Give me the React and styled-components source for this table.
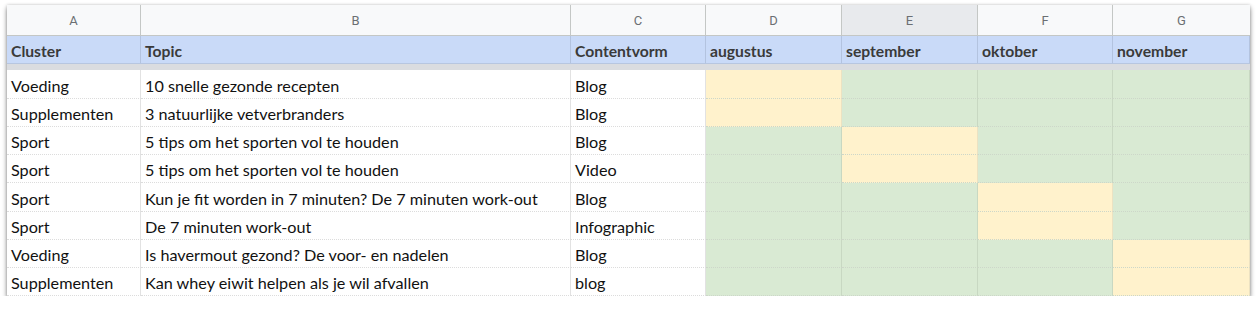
import React from 'react';
import styled, {createGlobalStyle} from 'styled-components';

const columns = ['A', 'B', 'C', 'D', 'E', 'F', 'G'];
const headers = ['Cluster', 'Topic', 'Contentvorm', 'augustus', 'september', 'oktober', 'november'];

// month column that is highlighted (yellow) per row: 0 = D, 1 = E ...
const rows = [
    ['Voeding', '10 snelle gezonde recepten', 'Blog', 0],
    ['Supplementen', '3 natuurlijke vetverbranders', 'Blog', 0],
    ['Sport', '5 tips om het sporten vol te houden', 'Blog', 1],
    ['Sport', '5 tips om het sporten vol te houden', 'Video', 1],
    ['Sport', 'Kun je fit worden in 7 minuten? De 7 minuten work-out', 'Blog', 2],
    ['Sport', 'De 7 minuten work-out', 'Infographic', 2],
    ['Voeding', 'Is havermout gezond? De voor- en nadelen', 'Blog', 3],
    ['Supplementen', 'Kan whey eiwit helpen als je wil afvallen', 'blog', 3],
];

const App = () => {
    return (
        <>
            <GlobalStyle/>
            <Sheet>
                {columns.map((c) => (
                    <ColHeader key={c} $active={c === 'E'}>{c}</ColHeader>
                ))}
                {headers.map((h) => (
                    <HeaderCell key={h}>{h}</HeaderCell>
                ))}
                <FreezeBand/>
                {rows.map(([cluster, topic, vorm, month], i) => (
                    <React.Fragment key={i}>
                        <Cell>{cluster}</Cell>
                        <Cell>{topic}</Cell>
                        <Cell>{vorm}</Cell>
                        {[0, 1, 2, 3].map((m) => (
                            <Cell key={m} $tone={m === month ? 'planned' : 'free'}/>
                        ))}
                    </React.Fragment>
                ))}
            </Sheet>
        </>
    );
};

const GlobalStyle = createGlobalStyle`
    body {
        margin: 0;
        background: #ffffff;
    }
`;

const Sheet = styled.div`
    display: grid;
    grid-template-columns: 134px 430px 135px 136px 136px 135px 137px;
    grid-template-rows: 31px 28px 6px 29px 28px 28px 28px 29px 28px 28px 28px;
    width: 1243px;
    margin: 5px 0 0 7px;
    background: #fff;
    box-shadow: 0 3px 5px rgba(0, 0, 0, 0.45), 0 0 3px rgba(0, 0, 0, 0.18);
`;

const ColHeader = styled.div`
    display: flex;
    align-items: center;
    justify-content: center;
    background: ${(p) => (p.$active ? '#e8eaed' : '#f8f9fa')};
    border-right: 1px solid #c4c7c5;
    border-bottom: 1px solid #c4c7c5;
    font-family: Roboto, "Liberation Sans", sans-serif;
    font-size: 13px;
    color: #6b6f73;
    padding-top: 1px;
    box-sizing: border-box;

    &:nth-child(7) {
        border-right: none;
    }
`;

const HeaderCell = styled.div`
    display: flex;
    align-items: flex-end;
    padding: 0 0 3px 4px;
    box-sizing: border-box;
    background: #c9daf8;
    border-right: 1px solid #b3c3df;
    border-bottom: 1px solid #b7c6e0;
    font-family: Lato, "Open Sans", sans-serif;
    font-weight: 700;
    font-size: 15.7px;
    color: #3a3a3a;
    overflow: hidden;
    white-space: nowrap;
`;

const FreezeBand = styled.div`
    grid-column: 1 / -1;
    background: #dadce0;
`;

const Cell = styled.div`
    display: flex;
    align-items: flex-end;
    padding: 0 0 3px 4px;
    box-sizing: border-box;
    background: ${(p) => (p.$tone === 'planned' ? '#fff2cc' : p.$tone === 'free' ? '#d9ead3' : '#ffffff')};
    border-right: 1px solid ${(p) => (p.$tone === 'planned' ? '#ece2c2' : p.$tone === 'free' ? '#c8d8c2' : '#e2e2e2')};
    border-bottom: 1px dotted ${(p) => (p.$tone ? '#cdd7c9' : '#dcdcdc')};
    font-family: Lato, "Open Sans", sans-serif;
    font-size: 16.2px;
    color: #111;
    white-space: nowrap;
    overflow: hidden;
`;

export default App;
